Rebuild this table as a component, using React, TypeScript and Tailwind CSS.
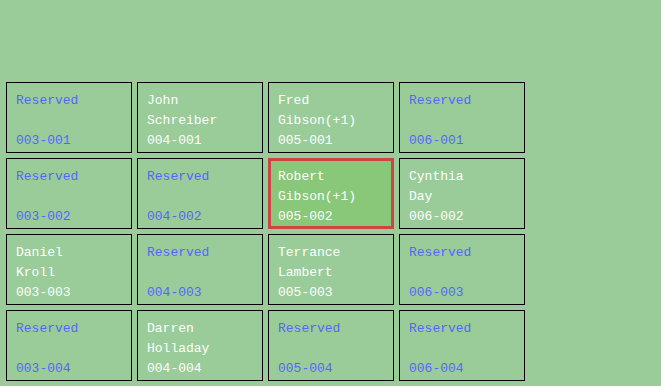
const seats = [
  ["003-001", null], ["004-001", "John\nSchreiber"], ["005-001", "Fred\nGibson(+1)"], ["006-001", null],
  ["003-002", null], ["004-002", null], ["005-002", "Robert\nGibson(+1)"], ["006-002", "Cynthia\nDay"],
  ["003-003", "Daniel\nKroll"], ["004-003", null], ["005-003", "Terrance\nLambert"], ["006-003", null],
  ["003-004", null], ["004-004", "Darren\nHolladay"], ["005-004", null], ["006-004", null],
] as const;

export default function App() {
  return (
    <div className="h-[386px] w-[661px] overflow-hidden bg-[#99cc99] pt-[82px] pl-[6px] font-['Liberation_Mono',monospace] text-[13px] leading-[20px]">
      <div className="grid w-[519px] grid-cols-[repeat(4,126px)] gap-[5px]">
        {seats.map(([code, name]) => {
          const selected = code === "005-002";
          const reserved = name === null;
          return (
            <div
              key={code}
              className={
                selected
                  ? "flex h-[71px] flex-col border-[3px] border-[#cc4444] bg-[#88c878] pt-[6px] pl-[7px] text-white"
                  : reserved
                    ? "flex h-[71px] flex-col border border-black pt-[8px] pl-[9px] text-[#5566ff]"
                    : "flex h-[71px] flex-col border border-black pt-[8px] pl-[9px] text-white"
              }
            >
              {reserved ? (
                <>
                  <div>Reserved</div>
                  <div className="h-[20px]" />
                </>
              ) : (
                name.split("\n").map((l) => <div key={l}>{l}</div>)
              )}
              <div>{code}</div>
            </div>
          );
        })}
      </div>
    </div>
  );
}
